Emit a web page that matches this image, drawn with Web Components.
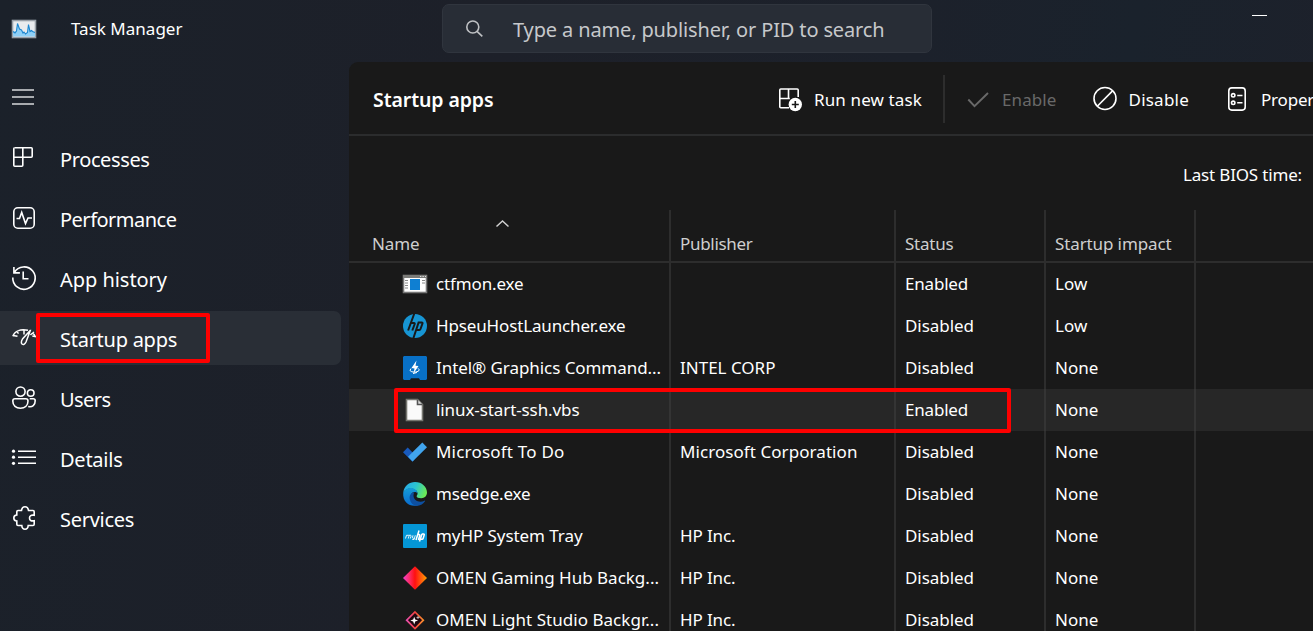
<!DOCTYPE html>
<html lang="en">
<head>
<meta charset="utf-8">
<title>Task Manager</title>
<style>
html,body{margin:0;height:100%;overflow:hidden;background:#1c2029}
body{font-family:"Noto Sans","Open Sans",sans-serif;color:#fff}
</style>
</head>
<body>
<task-manager></task-manager>
<script>
const ICONS = {
  app: `<rect x=".5" y="3.5" width="23" height="17" fill="#e9ebee" stroke="#9aa0a8"/><path d="M1 15l3-1 1.500-7.500 2 5.500 2 1 1.500 3 1-1 1.500 2 2-1.500 1-8 2 6.500 1.500-.5 1 1 2 1v4H1z" fill="#8fd0f7"/><path d="M1 14.500l2 1.500 1.500-2 1-7.500 2 5.500 2 1 1.500 3 1-1 1.500 2 2-1.500 1-8 1.500 7 1.500-1 1 1 2.500 1" fill="none" stroke="#1d86cf" stroke-width="1.100"/>`,
  menu: `<path d="M0 4h22M0 11h22M0 18h22" stroke-width="1.400"/>`,
  processes: `<path d="M3 1.800h16.200q1 0 1 1v7.400q0 1-1 1H1.800M10.800 1.800v17.400q0 1-1 1H2.800q-1 0-1-1V2.800q0-1 1-1"/>`,
  performance: `<rect x="1.800" y="1.800" width="20.400" height="20.400" rx="4"/><path d="M4.500 12.500h3l2.200-6 3.800 11 2.500-5.500H20"/>`,
  history: `<path d="M2.300 6.500A11.200 11.200 0 1 1 .8 11.500M1.900 1v5.900h6M11.200 5.500v7.300h5.300"/>`,
  startup: `<path d="M.8 10.300Q2.400 6 6.500 4.600Q10 3.300 16 4.300M12 4v4.500M1 9.500l4.500.8M5 5.600l1.500 2M18.200 4.500L10.500 13Q8.500 16.500 10 18q2 1.800 4-2L18.300 4.500zM18.500 9q2.500-3.500 4.800 1.500l-3-.5M20.500 7l1.500-1" stroke-width="1.500"/>`,
  users: `<circle cx="8.500" cy="5.600" r="4.600"/><circle cx="18.700" cy="7" r="3.300"/><path d="M3 12.800h10.800q2.200 0 2.200 2.200c0 4.800-3.300 7.200-7.600 7.200S.8 19.800.8 15Q.8 12.800 3 12.800M17.700 12.800h3.500q2 0 2 2c0 4.500-2.800 6.500-7 5.700"/>`,
  details: `<path d="M6 5.300h18M6 11.300h18M6 17.300h18" stroke-width="1.500"/><g fill="currentColor" stroke="none"><circle cx="1.500" cy="5.200" r="1.600"/><circle cx="1.500" cy="11.200" r="1.600"/><circle cx="1.500" cy="17.300" r="1.600"/></g>`,
  services: `<path d="M6 4.500h3.500Q10 .8 13 .8T16.500 4.500H21q1.200 0 1.200 1.200V9.300Q17.500 8.500 17.500 12t4.700 2.800V18.300q0 1.200-1.200 1.200H16.200Q16 23.200 13 23.200T9.800 19.500H6q-1.200 0-1.200-1.200V15Q1.800 14.800 1.800 12T4.800 9V5.700Q4.800 4.500 6 4.500"/>`,
  search: `<circle cx="6.800" cy="7" r="6"/><path d="M11 11.300l5.300 5"/>`,
  run: `<path d="M11 20.700H2.800q-1 0-1-1V3q0-1 1-1h16.400q1 0 1 1v7M1.800 11.500h10M10.500 2v9"/><circle cx="17.300" cy="17.500" r="6.700" fill="currentColor" stroke="none"/><path d="M17.300 14v7M13.800 17.500h7" stroke="#191919"/>`,
  check: `<path d="M2.300 12.500l6.200 6.700L22 6" stroke-width="1.900"/>`,
  disable: `<circle cx="12" cy="11.500" r="11"/><path d="M4.300 19.200L19.800 3.600"/>`,
  props: `<rect x="3.800" y=".9" width="16.400" height="22.200" rx="3"/><circle cx="8.200" cy="8.300" r="1.700"/><circle cx="8.200" cy="15.800" r="1.700"/><path d="M12.200 8.500h5.300M12.200 15.800h5.300"/>`,
  up: `<path d="M1.500 11.500L7.500 6l6 5.500" stroke-width="1.500"/>`,
  exe: `<rect x=".5" y="3.500" width="23" height="17" fill="#fff" stroke="#777"/><rect y="3" width="24" height="3" fill="#7b7b78"/><path d="M17 4.500h1.300m1.200 0h1.300m1.200 0h1" stroke="#ddd" stroke-width="1"/><rect x="7" y="7" width="10" height="11" fill="#0f7fd2"/><path d="M2 8.500h3M2 11h3M2 13.500h3M2 16h3M19 8.500h3M19 11h3" stroke="#888" stroke-width="1"/>`,
  hp: `<circle cx="12" cy="12" r="12" fill="#1795d3"/><g stroke="#191919" fill="none" stroke-width="2"><path d="M11.300-.5L5.100 16.500M8 9h3q1 0 .7 1L9.300 16.500M18.800 8.500h-3.200L10.300 24.500M15.500 8.500h3.300q1 0 .7 1l-2 5.500q-.3 1-1.300 1h-3"/></g>`,
  intel: `<path d="M1 0h22l1 1v22l-1 1h-6l-1-1.700H8L7 24H1l-1-1V1z" fill="#0870c6"/><path d="M13.500 4.500L8.500 12l3 .5-1 5 5-7.500-3-.3z" fill="#fff"/><path d="M8 12.500q-2.500 2.300.8 3.300t6.500-.5q2-1.500-.3-3M10 17.500l4-1" fill="none" stroke="#fff" stroke-width="1"/>`,
  file: `<path d="M3.500 1.500h11l5 5v16h-16z" fill="#fafafa" stroke="#777771"/><path d="M14.500 1.500v5h5" fill="#ddd" stroke="#555"/>`,
  todo: `<path d="M0 12.300L4.700 7.500l8.500 8.700-3.700 5.500z" fill="#185abd"/><path d="M5 16.800L19.300 2.500 24 7.200 9.600 21.600z" fill="#41a5ee"/>`,
  edge: `<defs><linearGradient id="eg" x1="0" y1=".2" x2="1" y2=".5"><stop offset="0" stop-color="#28a9ea"/><stop offset=".5" stop-color="#2bc4cf"/><stop offset="1" stop-color="#6bea55"/></linearGradient><linearGradient id="eb" x1="0" y1="0" x2="0" y2="1"><stop offset="0" stop-color="#159cd8"/><stop offset="1" stop-color="#096bce"/></linearGradient></defs><path d="M.3 10.500C1.200 3.800 6.200 0 12 0c7 0 12 5 12 10.500 0 3.500-2.500 5.700-5.700 5.700-3 0-4.700-1-4.700-2 0-.7 1-1.300 1-2.700 0-3-3.800-5-7.200-5-3 0-5.500 1.400-7.100 4z" fill="url(#eg)"/><path d="M.2 10.500C2 7.300 4.700 6 7.600 6c4.200 0 6.800 2.600 7 5.500-.9-1-2-1.400-3.100-1.400-2.200 0-3.700 1.800-3.700 4.400 0 4.500 4.200 8.500 8.900 7.700C10.500 26-.7 22.800.2 10.500z" fill="url(#eb)"/><path d="M11.500 10.100c-3.500 1-5.500 3.500-4.700 7.200.7 3.500 3.200 6 6.700 6.600 3.500 0 6.500-1.800 8.500-4.700.3-.5 0-.8-.5-.5-5.500 2.800-11-.6-11-5.200 0-1.400.4-2.500 1-3.400z" fill="#0d4fa0"/>`,
  myhp: `<rect width="24" height="24" rx="1" fill="#0496d6"/><path d="M2.500 14.500l1-3.200h2q.7 0 .4 1l-.6 2.200M6 11.300h1.600q.7 0 .4 1l-.7 2.200M10 11.300l-.5 2q-.2 1 .8 1h1M12.300 11.300l-1.200 4.200h-1.800" fill="none" stroke="#fff" stroke-width=".9"/><path d="M16 6.500l-3 9.500M14.500 10.500h1.700q.8 0 .5 1L15.400 16M19 10l-2.500 7.500M18.800 10h1.900q.8 0 .5 1l-1 3.300q-.3 1-1 1h-1.800" fill="none" stroke="#fff" stroke-width="1.500"/>`,
  omen: `<defs><linearGradient id="og"><stop offset="0" stop-color="#f040d0"/><stop offset=".25" stop-color="#fb2e6e"/><stop offset=".5" stop-color="#ff1010"/><stop offset=".75" stop-color="#ff5a0c"/><stop offset="1" stop-color="#ffa000"/></linearGradient></defs><path d="M12 .3L24 12 12 23.700 0 12z" fill="url(#og)"/>`,
  light: `<defs><linearGradient id="lg" x1="0" x2="1"><stop offset="0" stop-color="#e850b0"/><stop offset=".5" stop-color="#f84040"/><stop offset="1" stop-color="#f8902c"/></linearGradient></defs><path d="M12 4l8.300 8.200L12 20.500l-8.300-8.300z" fill="#200810" stroke="url(#lg)" stroke-width="1.700"/><path d="M11.200 8.700l1 2.900 2.900 1-2.900 1-1 2.900-1-2.900-2.900-1 2.900-1z" fill="#fff"/><path d="M15 8v3M13.500 9.500h3" stroke="#ccc" stroke-width=".8"/>`
};

const define = (name, css, html, after) => {
  const t = document.createElement('template');
  t.innerHTML = `<style>${css}</style>${html}`;
  customElements.define(name, class extends HTMLElement {
    connectedCallback() {
      if (this.shadowRoot) return;
      this.attachShadow({mode: 'open'}).append(t.content.cloneNode(true));
      if (after) after(this, this.shadowRoot);
    }
  });
};

define('tm-icon', `:host{display:block;flex:none;width:24px;height:24px}svg{display:block;width:100%;height:100%;fill:none;stroke:currentColor;stroke-width:1.6;overflow:visible}
.plain{stroke:none}`, ``, (el, root) => {
  const s = +el.getAttribute('box') || 24;
  const w = document.createElement('div');
  const plain = el.hasAttribute('plain') ? ' class="plain"' : '';
  w.style.height = '100%';
  w.innerHTML = `<svg${plain} viewBox="0 0 ${s} ${s}">${ICONS[el.getAttribute('name')]}</svg>`;
  root.append(w);
});

/* A one-line label whose tracking is adjusted so that it spans the width given in "w". */
define('tm-label', `:host{display:block;flex:none;white-space:pre}span{display:inline-block}`, `<span><slot></slot></span>`, (el, root) => {
  const span = root.querySelector('span'), w = +el.getAttribute('w');
  if (!w) return;
  const n = el.textContent.length;
  span.style.letterSpacing = ((w - span.getBoundingClientRect().width) / n).toFixed(3) + 'px';
});

define('tm-titlebar', `:host{display:flex;height:62px;align-items:flex-start;box-sizing:border-box}
.id{display:flex;align-items:center;gap:35px;width:430px;padding:1px 0 0 12px;height:56px;box-sizing:content-box;font-size:17px}
.id tm-label{padding-bottom:2px}
.search{display:flex;align-items:center;gap:30px;box-sizing:border-box;width:490px;height:49px;margin-top:4px;padding-left:23px;border:1px solid #30353e;border-radius:7px;background:#282d36;color:#c6c8cb;font-size:20px}
.search tm-icon{width:17px;height:17px;color:#bfc1c4}
.search tm-label{padding-top:2px}
.min{width:15px;height:1px;background:#fff;margin:15px 0 0 320px}`,
`<div class="id"><tm-icon plain name="app"></tm-icon><tm-label w="111.500">Task Manager</tm-label></div>
<div class="search"><tm-icon box="17" name="search"></tm-icon><tm-label w="371.5">Type a name, publisher, or PID to search</tm-label></div><div class="min"></div>`);

define('tm-nav-item', `:host{display:flex;align-items:center;gap:24px;width:341px;height:54px;box-sizing:border-box;padding-left:12px;border-radius:0 7px 7px 0;font-size:20px;position:relative}
:host([selected]){background:#292e36}
.lab{padding-top:2px}
.mark{display:none;position:absolute;left:35.5px;top:1.5px;width:174px;height:50px;box-sizing:border-box;border:4px solid #fe0000;border-radius:2px}
:host([selected]) .mark{display:block}`,
`<slot name="icon"></slot><div class="lab"><slot></slot></div><div class="mark"></div>`);

define('tm-sidebar', `:host{display:flex;flex-direction:column;gap:6px;width:349px;flex:none}
.menu{height:63px;padding:24px 0 0 12px;box-sizing:border-box}.menu tm-icon{width:22px;height:22px;color:#d8d9db}`,
`<div class="menu"><tm-icon box="22" name="menu"></tm-icon></div>
<tm-nav-item><tm-icon slot="icon" name="processes"></tm-icon><tm-label w="89.500">Processes</tm-label></tm-nav-item>
<tm-nav-item><tm-icon slot="icon" name="performance"></tm-icon><tm-label w="116.500">Performance</tm-label></tm-nav-item>
<tm-nav-item><tm-icon slot="icon" name="history"></tm-icon><tm-label w="107">App history</tm-label></tm-nav-item>
<tm-nav-item selected><tm-icon slot="icon" name="startup"></tm-icon><tm-label w="117">Startup apps</tm-label></tm-nav-item>
<tm-nav-item><tm-icon slot="icon" name="users"></tm-icon><tm-label w="50.500">Users</tm-label></tm-nav-item>
<tm-nav-item><tm-icon slot="icon" name="details"></tm-icon><tm-label w="62.500">Details</tm-label></tm-nav-item>
<tm-nav-item><tm-icon slot="icon" name="services"></tm-icon><tm-label w="74">Services</tm-label></tm-nav-item>`);

define('tm-command', `:host{display:flex;align-items:center;gap:12px;flex:none;height:72px;padding-top:2px;box-sizing:border-box}
:host([off]){color:#696969}.lab{padding-top:1px}`,
`<slot name="icon"></slot><div class="lab"><slot></slot></div>`);

define('tm-toolbar', `:host{display:flex;align-items:center;height:74px;box-sizing:border-box;border-bottom:2px solid #2b2c2d;padding-left:24px;font-size:17px;overflow:hidden}
.title{font-size:19.500px;font-weight:600;width:405px;padding-top:2px;flex:none}
.sep{width:2px;height:48px;background:#2d2d2d;margin:2px 21px 0 21px;flex:none}
.b{margin-left:36px}.c{margin-left:36px}`,
`<div class="title"><tm-label w="120.500">Startup apps</tm-label></div>
<tm-command><tm-icon slot="icon" name="run"></tm-icon><tm-label w="108">Run new task</tm-label></tm-command>
<div class="sep"></div>
<tm-command off><tm-icon slot="icon" name="check"></tm-icon><tm-label w="54.500">Enable</tm-label></tm-command>
<tm-command class="b"><tm-icon slot="icon" name="disable"></tm-icon><tm-label w="60.500">Disable</tm-label></tm-command>
<tm-command class="c"><tm-icon slot="icon" name="props"></tm-icon><tm-label w="80.500">Properties</tm-label></tm-command>`);

const GRID = 'display:grid;grid-template-columns:322px 225px 150px 150px 1fr;';
const CELL = '.c{box-sizing:border-box;border-right:2px solid #2d2d2d;padding-left:9px;display:flex;overflow:hidden}';

define('tm-columns', `:host{${GRID}height:53px;box-sizing:border-box;border-bottom:2px solid #2d2d2d;font-size:17px;color:#cfcfcf;line-height:24px}
${CELL}.c{align-items:flex-end;padding-bottom:5px}.c.first{padding-left:23px}
.c tm-icon{width:15px;height:15px;margin:0 0 26px 75px;color:#d0d0d0}`,
`<div class="c first"><tm-label w="47.500">Name</tm-label><tm-icon box="15" name="up"></tm-icon></div><div class="c"><tm-label w="72.500">Publisher</tm-label></div><div class="c"><tm-label w="48.500">Status</tm-label></div><div class="c"><tm-label w="116.500">Startup impact</tm-label></div>`);

define('tm-row', `:host{${GRID}height:42px;font-size:17px;position:relative}
:host([selected]){background:#272727}
${CELL}.c{align-items:center}.c.first{padding-left:54px;gap:9px}
::slotted(tm-label){margin-top:-2px}
:host([selected]) .c{border-color:#343434}
.mark{display:none;position:absolute;left:45px;top:-1px;width:617px;height:45px;box-sizing:border-box;border:4px solid #fe0000;border-radius:2px;z-index:1}
:host([selected]) .mark{display:block}`,
`<div class="c first"><slot name="icon"></slot><slot></slot></div><div class="c"><slot name="publisher"></slot></div><div class="c"><slot name="status"></slot></div><div class="c"><slot name="impact"></slot></div><div class="mark"></div>`);

const ROWS = [
  ['exe','ctfmon.exe',87.5,'',0,'Enabled','Low'],
  ['hp','HpseuHostLauncher.exe',189.5,'',0,'Disabled','Low'],
  ['intel','Intel® Graphics Command...',225,'INTEL CORP',95.5,'Disabled','None'],
  ['file','linux-start-ssh.vbs',143.5,'',0,'Enabled','None'],
  ['todo','Microsoft To Do',128.5,'Microsoft Corporation',177.5,'Disabled','None'],
  ['edge','msedge.exe',94.5,'',0,'Disabled','None'],
  ['myhp','myHP System Tray',146.5,'HP Inc.',55.5,'Disabled','None'],
  ['omen','OMEN Gaming Hub Backg...',223,'HP Inc.',55.5,'Disabled','None'],
  ['light','OMEN Light Studio Backgr...',223,'HP Inc.',55.5,'Disabled','None']
];
const W = {Enabled: 63, Disabled: 69, Low: 32.5, None: 43.5};

define('tm-panel', `:host{display:block;flex:1;min-width:0;background:#191919;border-radius:9px 0 0 0;overflow:hidden}
.bios{display:flex;justify-content:flex-end;align-items:center;height:74px;box-sizing:border-box;padding:2px 11px 0 0;font-size:17px}`,
`<tm-toolbar></tm-toolbar><div class="bios"><tm-label w="119">Last BIOS time:</tm-label></div><tm-columns></tm-columns>` +
ROWS.map(([i,n,w,p,pw,s,m]) => `<tm-row${i === 'file' ? ' selected' : ''}><tm-icon plain slot="icon" name="${i}"></tm-icon><tm-label w="${w}">${n}</tm-label>${p ? `<tm-label slot="publisher" w="${pw}">${p}</tm-label>` : ''}<tm-label slot="status" w="${W[s]}">${s}</tm-label><tm-label slot="impact" w="${W[m]}">${m}</tm-label></tm-row>`).join(''));

define('task-manager', `:host{display:flex;flex-direction:column;height:631px;overflow:hidden;background:linear-gradient(100deg,#1b212a,#1d2029 35%,#1c212b 65%,#1a222c 80%,#1e212b)}
.body{display:flex;flex:1;min-height:0}`,
`<tm-titlebar></tm-titlebar><div class="body"><tm-sidebar></tm-sidebar><tm-panel></tm-panel></div>`);
</script>
</body>
</html>
